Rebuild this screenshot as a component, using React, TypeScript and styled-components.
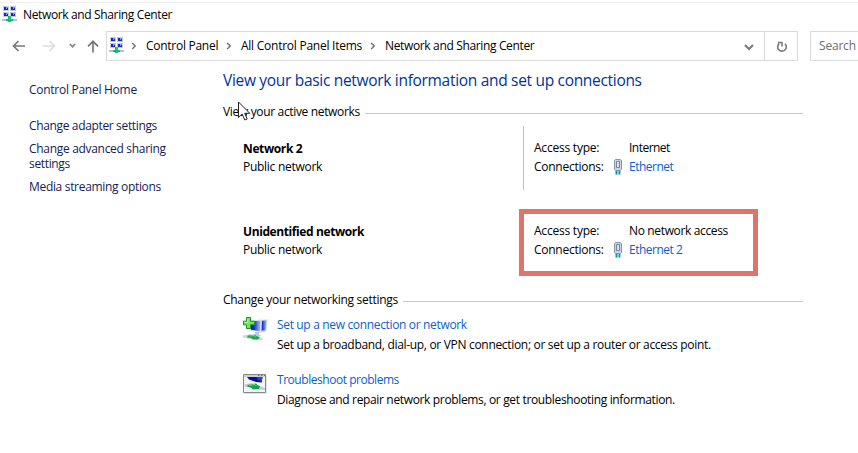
import React from 'react';
import styled, { createGlobalStyle } from 'styled-components';

const GlobalStyle = createGlobalStyle`
  * { box-sizing: border-box; }
  body {
    margin: 0;
    background: #fff;
    color: #000;
    font: 12px/16px "Open Sans", "Noto Sans", sans-serif;
    overflow: hidden;
  }
  svg { display: block; flex: none; }
`;

const Window = styled.div`
  width: 858px;
  height: 453px;
  overflow: hidden;
  position: relative;
  padding-top: 2px;
  background: #fff;
`;

const Text = styled.span<{ $track: number }>`
  white-space: nowrap;
  letter-spacing: ${p => p.$track}px;
`;

const TitleBar = styled.header`
  display: flex;
  gap: 6px;
  height: 29px;
  padding: 3px 0 0 2px;
  border-top: 1px solid #f0f0f0;
`;

const Title = styled(Text)`
  padding-top: 1px;
`;

const NavBar = styled.nav`
  display: flex;
  height: 30px;
`;

const NavButtons = styled.div`
  display: flex;
  width: 106px;
  flex: none;
`;

const AddressBar = styled.div`
  display: flex;
  width: 692px;
  flex: none;
  border: 1px solid #d9d9d9;
  padding: 0 0 0 2px;
`;

const AddressIcon = styled.div`
  width: 14px;
  padding-top: 5px;
`;

const Crumb = styled(Text)<{ $width: number }>`
  width: ${p => p.$width}px;
  flex: none;
  padding-top: 6px;
`;

const Separator = styled.div`
  width: 23px;
  flex: none;
  padding: 10px 0 0 8px;
`;

const DropArrow = styled.div`
  margin-left: auto;
  padding: 12px 10px 0 0;
`;

const Refresh = styled.div`
  width: 33px;
  border-left: 1px solid #d9d9d9;
  padding: 9px 0 0 11px;
`;

const SearchBox = styled.div`
  width: 180px;
  flex: none;
  margin-left: 12px;
  border: 1px solid #d9d9d9;
  padding: 6px 0 0 8px;
  color: #6d6d6d;
  white-space: nowrap;
  letter-spacing: -0.2px;
`;

const Body = styled.div`
  display: flex;
`;

const Sidebar = styled.aside`
  display: flex;
  flex-direction: column;
  width: 223px;
  flex: none;
  padding: 21px 0 0 29px;
  gap: 8px;
  color: #151c55;
  line-height: 15px;
`;

const HomeLink = styled(Text)`
  margin-bottom: 13px;
`;

const SideLines = styled.div`
  display: flex;
  flex-direction: column;
`;

const Main = styled.main`
  width: 580px;
  flex: none;
`;

const Heading = styled.h1`
  margin: 0;
  padding-top: 8px;
  height: 43px;
  font-size: 15.5px;
  line-height: 22px;
  font-weight: 400;
  letter-spacing: -0.31px;
  color: #003399;
  white-space: nowrap;
`;

const SectionTitle = styled.div`
  display: flex;
  align-items: center;
  height: 16px;
`;

const Rule = styled.div<{ $gap: number }>`
  flex: 1;
  height: 1px;
  margin: 2px 0 0 ${p => p.$gap}px;
  background: #cacaca;
`;

const NetworkRow = styled.section<{ $top: number }>`
  display: flex;
  height: 83px;
  margin-top: ${p => p.$top}px;
  padding-left: 20px;
`;

const NetworkName = styled.div`
  width: 280px;
  display: flex;
  flex-direction: column;
  padding-top: 15px;
  gap: 2px;
`;

const Strong = styled(Text)`
  font-weight: 700;
`;

const Details = styled.div<{ $line?: boolean }>`
  width: 240px;
  height: 64px;
  border-left: 1px solid ${p => (p.$line ? '#c2c2c2' : 'transparent')};
  padding: 14px 0 0 10px;
  display: grid;
  grid-template-columns: 79px 16px 1fr;
  grid-template-rows: 16px 16px;
  row-gap: 3px;
`;

const Value = styled(Text)`
  grid-column: 3;
`;

const Link = styled(Text)`
  color: #0b61ce;
`;

const Highlight = styled.div`
  position: absolute;
  left: 519px;
  top: 209px;
  width: 239px;
  height: 67px;
  border: 5px solid #df746d;
`;

const Pointer = styled.div`
  position: absolute;
  left: 238px;
  top: 101px;
`;

const Task = styled.div<{ $top: number }>`
  display: flex;
  margin: ${p => p.$top}px 0 0 20px;
  height: 36px;
  gap: 9px;
`;

const TaskText = styled.div`
  display: flex;
  flex-direction: column;
  gap: 4px;
`;

const monitors = [[1, 0], [8, 0], [1, 6], [8, 6]];

const NetworkIcon = () => (
  <svg width="15" height="16" viewBox="0 0 15 16" shapeRendering="crispEdges">
    {monitors.map(([x, y]) => (
      <g key={`${x}-${y}`}>
        <path fill="#c3cbd8" d={`M${x} ${y}h6v5h-6z`} />
        <path fill="#1a28b8" d={`M${x + 1} ${y + 1}h4v3h-4z`} />
        <path fill="#7d9bf0" d={`M${x + 3} ${y + 1}h2v1h-1v1h-1z`} />
      </g>
    ))}
    <path fill="#b7c3c8" d="M0 13h15v2H0z" />
    <path fill="#12c977" d="M6 10h3v3h2v2H9v1H6v-1H4v-2h2z" />
    <path fill="#0db568" d="M6 10h1v5H6zM4 14h7v1H4z" />
  </svg>
);

const Chevron = () => (
  <svg width="6" height="8" viewBox="0 0 6 8" fill="none" stroke="#777" strokeWidth="1.5">
    <path d="M1.2 1 4.200 4 1.2 7" />
  </svg>
);

const PlugIcon = () => (
  <svg width="10" height="17" viewBox="0 0 10 17">
    <path d="M2 12h5.600v3.600H2z" fill="#8fdcf0" />
    <path d="M1.500 1.500 2.500 .5h4.500l1.500 1v9L7.500 11.500h-5l-1-1z" fill="#ccd4e0" stroke="#8494a8" />
    <path d="M3.500 2.500h3v6h-3z" fill="#f6f8fc" stroke="#75859c" />
    <path d="M5 3v5" stroke="#c3cbd6" />
    <path d="M3.500 12v3.500M6.500 12v3.500" stroke="#168fb8" strokeWidth="1.400" />
  </svg>
);

const NewConnectionIcon = () => (
  <svg width="25" height="25" viewBox="0 0 25 25">
    <defs>
      <linearGradient id="screen" x1="0" x2="1">
        <stop offset="0" stopColor="#0510a0" />
        <stop offset=".45" stopColor="#1830c8" />
        <stop offset="1" stopColor="#a9c2f8" />
      </linearGradient>
    </defs>
    <path d="M14 3 24.500 2.500 23.500 14.500 16 16z" fill="#cdd5e3" />
    <path d="M16 4 23.500 3.500 22.500 13 17 14z" fill="url(#screen)" />
    <path d="M4 3.500 19 2.500 18.500 15.500 7 14z" fill="#dce1e8" />
    <path d="M6 4.500 17.500 3.700 17 14 8 12.800z" fill="url(#screen)" />
    <path d="M12 15h4v2.500l3 1-6 1-3-1 2-1z" fill="#c4c9ce" />
    <path d="M0 18.500 7 17l13 4.500-1 2-6-.5L0 20.500z" fill="#d1d6d9" />
    <path d="M5 18.500 12 17.500l1 1.500 4 1-2 2.500-6-.3-.5-1.300-4.500-.5z" fill="#16a64b" />
    <path d="M6.500 19 11.500 18.500l1 1.700" fill="none" stroke="#6be087" />
    <path d="M3.500 .5h4v3.700h4v3.600h-4v3.700h-4V7.800h-3V4.200h3z" fill="#7fe05c" stroke="#189524" />
    <path d="M4.800 2v3.500H1.500" fill="none" stroke="#c1f5a7" />
  </svg>
);

const TroubleshootIcon = () => (
  <svg width="25" height="23" viewBox="0 0 25 23">
    <path d="M1 4h23v18H1z" fill="#e2e2e2" />
    <path d="M.5 2.500h22v18H.5z" fill="#f4f5f7" stroke="#85898f" />
    <path d="M1 3h21v2H1z" fill="#c9cfda" />
    <path d="M15 3.500h1.500M18 3.500h1.500M21 3.500h1" stroke="#657085" />
    <path d="M4 5h15.500l-.8 5.500L13 10 6 7.500z" fill="#07109a" />
    <path d="M13.500 5h6l-.8 4-3.700-.8z" fill="#2444c8" />
    <path d="M1.500 12.500 9 11l13 5v2l-6-.5L1.500 14.500z" fill="#c5cbce" />
    <path d="m5 13 8-1.500 2 2 2 .5-1 3-6 .5-2-2-4-1z" fill="#12a348" />
    <path d="m6 13.300 6-.8 1.500 1.500" fill="none" stroke="#71dc87" />
  </svg>
);

const NavIcons = () => (
  <svg width="106" height="30" viewBox="0 0 106 30" fill="none" strokeWidth="1.700">
    <path d="M13.500 15H25M18.500 10l-5 5 5 5" stroke="#777" />
    <path d="M43 15h11.500M49.500 10l5 5-5 5" stroke="#ddd" />
    <path d="m69.800 13 2.700 2.700 2.700-2.700" stroke="#858585" />
    <path d="M93 21.500V10.500M88 15.300l5-5 5 5" stroke="#777" />
  </svg>
);

const ConnectionDetails = ({ line, access, accessTrack, link }: {
  line?: boolean; access: string; accessTrack: number; link: string;
}) => (
  <Details $line={line}>
    <Text $track={-0.22}>Access type:</Text>
    <Value $track={accessTrack}>{access}</Value>
    <Text $track={-0.26}>Connections:</Text>
    <PlugIcon />
    <Link $track={-0.5}>{link}</Link>
  </Details>
);

export default function App() {
  return (
    <Window>
      <GlobalStyle />
      <TitleBar>
        <NetworkIcon />
        <Title $track={-0.36}>Network and Sharing Center</Title>
      </TitleBar>
      <NavBar>
        <NavButtons><NavIcons /></NavButtons>
        <AddressBar>
          <AddressIcon><NetworkIcon /></AddressIcon>
          <Separator><Chevron /></Separator>
          <Crumb $track={-0.27} $width={72}>Control Panel</Crumb>
          <Separator><Chevron /></Separator>
          <Crumb $track={-0.25} $width={121}>All Control Panel Items</Crumb>
          <Separator><Chevron /></Separator>
          <Crumb $track={-0.35} $width={149}>Network and Sharing Center</Crumb>
          <DropArrow>
            <svg width="10" height="7" fill="none" stroke="#777" strokeWidth="2"><path d="m1 1 4 4 4-4" /></svg>
          </DropArrow>
          <Refresh>
            <svg width="12" height="12" fill="none" stroke="#777" strokeWidth="1.600">
              <path d="M9 2.800A4.300 4.300 0 1 1 3.200 2.600M2 1.500h4v4" />
            </svg>
          </Refresh>
        </AddressBar>
        <SearchBox>Search Control Panel</SearchBox>
      </NavBar>
      <Body>
        <Sidebar>
          <HomeLink $track={-0.27}>Control Panel Home</HomeLink>
          <Text $track={-0.35}>Change adapter settings</Text>
          <SideLines>
            <Text $track={-0.31}>Change advanced sharing</Text>
            <Text $track={-0.34}>settings</Text>
          </SideLines>
          <Text $track={-0.32}>Media streaming options</Text>
        </Sidebar>
        <Main>
          <Heading>View your basic network information and set up connections</Heading>
          <SectionTitle>
            <Text $track={-0.34}>View your active networks</Text>
            <Rule $gap={5} />
          </SectionTitle>
          <NetworkRow $top={6}>
            <NetworkName>
              <Strong $track={-0.38}>Network 2</Strong>
              <Text $track={-0.28}>Public network</Text>
            </NetworkName>
            <ConnectionDetails line access="Internet" accessTrack={-0.52} link="Ethernet" />
          </NetworkRow>
          <NetworkRow $top={0}>
            <NetworkName>
              <Strong $track={-0.4}>Unidentified network</Strong>
              <Text $track={-0.28}>Public network</Text>
            </NetworkName>
            <ConnectionDetails access="No network access" accessTrack={-0.35} link="Ethernet 2" />
          </NetworkRow>
          <SectionTitle>
            <Text $track={-0.28}>Change your networking settings</Text>
            <Rule $gap={5} />
          </SectionTitle>
          <Task $top={9}>
            <NewConnectionIcon />
            <TaskText>
              <Link $track={-0.34}>Set up a new connection or network</Link>
              <Text $track={-0.315}>Set up a broadband, dial-up, or VPN connection; or set up a router or access point.</Text>
            </TaskText>
          </Task>
          <Task $top={19}>
            <TroubleshootIcon />
            <TaskText>
              <Link $track={-0.46}>Troubleshoot problems</Link>
              <Text $track={-0.345}>Diagnose and repair network problems, or get troubleshooting information.</Text>
            </TaskText>
          </Task>
        </Main>
      </Body>
      <Highlight />
      <Pointer>
        <svg width="13" height="20" viewBox="0 0 13 20">
          <path d="M.5 1v15.500l3.700-3.500 2.600 6 2.400-1-2.500-5.700h5.100z" fill="#fff" stroke="#222" />
        </svg>
      </Pointer>
    </Window>
  );
}
